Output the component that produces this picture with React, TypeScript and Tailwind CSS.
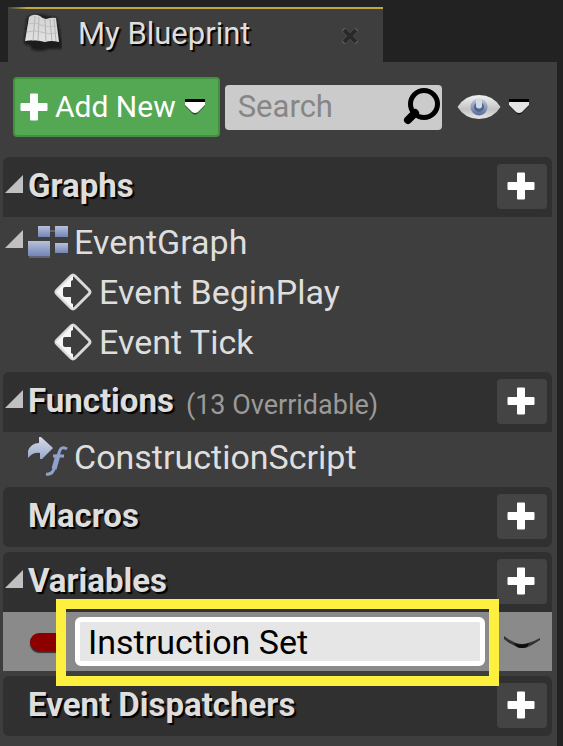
import { useState, type ReactNode } from "react";

const headingShadow = "[text-shadow:2px_2px_1px_#000]";

function PlusIcon() {
  return (
    <svg width="28" height="28" viewBox="0 0 28 28" aria-hidden="true" className="shrink-0">
      <path
        d="M11 0.5h6a1 1 0 0 1 1 1V10h8.500a1 1 0 0 1 1 1v6a1 1 0 0 1-1 1H18v8.500a1 1 0 0 1-1 1h-6a1 1 0 0 1-1-1V18H1.500a1 1 0 0 1-1-1v-6a1 1 0 0 1 1-1H10V1.500a1 1 0 0 1 1-1z"
        fill="#fff"
      />
    </svg>
  );
}

function CaretDown({ light }: { light?: boolean }) {
  return (
    <svg width="22" height="18" viewBox="0 0 22 18" aria-hidden="true" className="shrink-0">
      <path d="M1 3h20v5l-7 7q-3 3-6 0L1 8z" fill="#000" opacity="0.6" />
      <path d="M1 1h20v3H1z" fill="#000" />
      <path d="M1 4h20v3l-7 7q-3 2-6 0L1 7z" fill={light ? "#fff" : "#e4e4e4"} />
    </svg>
  );
}

function BookIcon() {
  return (
    <svg width="40" height="40" viewBox="0 0 40 40" aria-hidden="true" className="shrink-0">
      <defs>
        <linearGradient id="page" x1="0" y1="0" x2="0" y2="1">
          <stop offset="0" stopColor="#d2d2d2" />
          <stop offset="1" stopColor="#e2e2e2" />
        </linearGradient>
        <filter id="shade" x="-20%" y="-20%" width="140%" height="140%">
          <feGaussianBlur stdDeviation="1.2" />
        </filter>
        <filter id="blend" x="-10%" y="-10%" width="120%" height="120%">
          <feGaussianBlur stdDeviation="0.6" />
        </filter>
      </defs>
      <path d="M2 28L5 4l12-3 18 4 5 24v7H26l-6 2-9-1-4-5-5-1z" fill="#1a1a1a" filter="url(#shade)" />
      <g filter="url(#blend)">
        <path d="M7 4q5-4 11-1 3 3 6 3 6-2 10-1l3 24q-8-2-14 0-10-3-20-1z" fill="url(#page)" />
        <path d="M13 3l-2 25M17 4l-1 24M23 6l1 22M28 6l2 22M32 6l2 22" stroke="#b2b2b2" strokeWidth="1" fill="none" />
        <path d="M6 11q8-2 13 1 7 3 16 1M5 19q8-2 14 0 8 3 17 1" stroke="#c0c0c0" strokeWidth="1" fill="none" />
      </g>
    </svg>
  );
}

function SearchIcon() {
  return (
    <svg width="40" height="40" viewBox="0 0 40 40" aria-hidden="true" className="shrink-0">
      <circle cx="22" cy="17" r="13.500" fill="none" stroke="#000" strokeWidth="5" />
      <path d="M13 26L6 33" stroke="#000" strokeWidth="8" strokeLinecap="round" />
    </svg>
  );
}

function EyeIcon() {
  return (
    <svg width="44" height="26" viewBox="0 0 44 26" aria-hidden="true" className="shrink-0">
      <defs>
        <linearGradient id="eyeball" x1="0" y1="0" x2="0" y2="1">
          <stop offset="0" stopColor="#f2f2f2" />
          <stop offset="0.600" stopColor="#c4c4c4" />
          <stop offset="1" stopColor="#e6e6e6" />
        </linearGradient>
        <linearGradient id="iris" x1="0" y1="0" x2="0" y2="1">
          <stop offset="0" stopColor="#c2cad8" />
          <stop offset="1" stopColor="#566d9c" />
        </linearGradient>
        <filter id="irisBlend" x="-10%" y="-10%" width="120%" height="120%">
          <feGaussianBlur stdDeviation="0.7" />
        </filter>
      </defs>
      <path d="M0.500 13Q8 1 22 1t21.500 12Q36 25 22 25T0.500 13z" fill="url(#eyeball)" />
      <g filter="url(#irisBlend)">
        <circle cx="22" cy="13" r="8.500" fill="url(#iris)" />
        <circle cx="22" cy="13" r="5" fill="#4f6590" />
        <path d="M19 5h6v8q-3 3-6 0z" fill="#d3dae6" />
      </g>
    </svg>
  );
}

function GraphIcon() {
  return (
    <svg width="40" height="36" viewBox="0 0 40 36" aria-hidden="true" className="shrink-0">
      <defs>
        <linearGradient id="node" x1="0" y1="0" x2="0" y2="1">
          <stop offset="0" stopColor="#b8c1d8" />
          <stop offset="1" stopColor="#7385b8" />
        </linearGradient>
        <filter id="nodeBlend" x="-10%" y="-10%" width="120%" height="120%">
          <feGaussianBlur stdDeviation="0.6" />
        </filter>
      </defs>
      <g filter="url(#nodeBlend)">
        <path d="M20 7h8M1 33h21" stroke="#5f6373" strokeWidth="2" />
        <rect x="10" y="2" width="12" height="11" fill="url(#node)" />
        <rect x="27" y="2" width="13" height="11" fill="url(#node)" />
        <rect x="0" y="17" width="22" height="15" fill="url(#node)" />
        <rect x="27" y="19" width="13" height="10" fill="url(#node)" />
      </g>
    </svg>
  );
}

function EventIcon() {
  return (
    <svg width="40" height="40" viewBox="0 0 40 40" aria-hidden="true" className="shrink-0">
      <path
        d="M18 4Q20 2 22 4L36 18Q38 20 36 22L22 36Q20 38 18 36L4 22Q2 20 4 18z"
        fill="none"
        stroke="#dadada"
        strokeWidth="3"
      />
      <path d="M20 3L3 20l17 17v-5l-2-1v-6h-6q-2 0-2-2v-6q0-2 2-2h6V9l2-1z" fill="#f6f6f6" />
    </svg>
  );
}

function FunctionIcon() {
  return (
    <svg width="40" height="40" viewBox="0 0 40 40" aria-hidden="true" className="shrink-0">
      <defs>
        <linearGradient id="arrow" x1="0" y1="0" x2="0" y2="1">
          <stop offset="0" stopColor="#d6dbe8" />
          <stop offset="1" stopColor="#98a8cc" />
        </linearGradient>
        <filter id="arrowBlend" x="-10%" y="-10%" width="120%" height="120%">
          <feGaussianBlur stdDeviation="0.5" />
        </filter>
      </defs>
      <g filter="url(#arrowBlend)">
        <path d="M0 21V14Q3 6 11 6V0h2l12 11-11 11h-2v-6q-7-1-12 5z" fill="url(#arrow)" />
        <path d="M39 12q-6-4-8 4l-5 16q-2 6-8 5M25 19h11" stroke="#8fa1cc" strokeWidth="3" fill="none" />
        <path d="M30 18l-4 14" stroke="#8fa1cc" strokeWidth="5" />
      </g>
    </svg>
  );
}

function ClosedEyeIcon() {
  return (
    <svg width="38" height="14" viewBox="0 0 38 14" aria-hidden="true">
      <defs>
        <filter id="lidBlend" x="-10%" y="-20%" width="120%" height="140%">
          <feGaussianBlur stdDeviation="0.7" />
        </filter>
      </defs>
      <g filter="url(#lidBlend)">
        <path d="M1 1Q7 6 13 8t12 0Q32 6 37 3v2Q31 9 26 11.500q-7 3-13 0Q5 8 1 4z" fill="#333" />
        <path d="M11 8q8 3 15 0l-2 4q-5 2-10 0z" fill="#0a0a0a" />
      </g>
    </svg>
  );
}

function Expander() {
  return (
    <svg width="20" height="20" viewBox="0 0 20 20" aria-hidden="true">
      <path d="M19 1v18H1z" fill="#c0c0c0" />
    </svg>
  );
}

function ExpanderSlot({ open }: { open?: boolean }) {
  return <span className="flex w-[25px] shrink-0 justify-start pb-[6px] pl-px">{open && <Expander />}</span>;
}

function Section({ title, note, open, children }: { title: string; note?: string; open?: boolean; children?: ReactNode }) {
  return (
    <section>
      <header className={`flex h-[60px] items-center bg-[#303030] pr-[5px] ${children ? "rounded-t-md" : "rounded-md"}`}>
        <ExpanderSlot open={open} />
        <h2 className={`pb-[2px] text-[33px] leading-10 font-bold whitespace-nowrap ${headingShadow}`}>{title}</h2>
        {note && <span className="pt-[6px] pl-3 text-[27px] leading-9 whitespace-nowrap text-[#9a9a9a]">{note}</span>}
        <button
          type="button"
          aria-label={`Add to ${title}`}
          className="mb-px ml-auto flex h-[45px] w-[50px] shrink-0 items-center justify-center rounded bg-[#444] pr-[2px] pb-[2px]"
        >
          <PlusIcon />
        </button>
      </header>
      {children}
    </section>
  );
}

function Item({ label, icon, expandable, nested }: { label: string; icon: ReactNode; expandable?: boolean; nested?: boolean }) {
  return (
    <div className={`flex h-[50px] items-center ${nested ? "pl-[25px]" : ""}`}>
      <ExpanderSlot open={expandable} />
      {icon}
      <span className="pl-[6px] text-[34px] leading-10 whitespace-nowrap">{label}</span>
    </div>
  );
}

export default function App() {
  const [name, setName] = useState("Instruction Set");
  return (
    <div className="min-h-screen bg-[#222] pr-[6px] font-['Roboto','Noto_Sans',sans-serif] text-[#dedede]">
      <div className="pt-[7px] pl-2">
        <div className="w-[375px] bg-[#3e3e3e]">
          <div className="h-[2px] bg-linear-to-r from-[#3e3e3e] via-[#bfa93a] via-5% to-[#bfa93a] to-95%" />
          <div className="flex h-[53px] items-center pr-[25px] pl-[14px]">
            <div className="pb-[6px]">
              <BookIcon />
            </div>
            <h1 className={`pb-1 pl-4 text-[31px] leading-10 whitespace-nowrap ${headingShadow}`}>My Blueprint</h1>
            <button type="button" aria-label="Close tab" className="ml-auto">
              <svg width="16" height="16" viewBox="0 0 16 16" aria-hidden="true">
                <path d="M1 1l14 14M15 1L1 15" stroke="#5a5a5a" strokeWidth="5" />
                <path d="M2 2l12 12M14 2L2 14" stroke="#292929" strokeWidth="4" />
              </svg>
            </button>
          </div>
        </div>
      </div>
      <main className="min-h-[calc(100vh-62px)] bg-[#3e3e3e] pr-[5px] pb-[10px] pl-[3px]">
        <div className="flex h-[95px] items-center pb-[5px] pl-[10px]">
          <button
            type="button"
            className="flex h-[60px] shrink-0 items-center rounded-sm border-2 border-[#43913f] bg-[#54a854] pr-3 pl-[5px] text-white"
          >
            <PlusIcon />
            <span className="pr-2 pl-[7px] text-[30px] leading-10 whitespace-nowrap">Add New</span>
            <CaretDown light />
          </button>
          <div className="ml-[5px] flex h-[45px] w-[217px] items-center rounded bg-[#cbcbcb] pl-[13px]">
            <input
              type="search"
              aria-label="Search"
              placeholder="Search"
              className="min-w-0 flex-1 bg-transparent text-[31px] leading-10 text-black outline-none placeholder:text-[#868686] placeholder:opacity-100"
            />
            <SearchIcon />
          </div>
          <button type="button" aria-label="View options" className="ml-[15px] flex shrink-0 items-center gap-[7px]">
            <EyeIcon />
            <CaretDown />
          </button>
        </div>
        <div className="flex flex-col gap-[5px]">
          <Section title="Graphs" open>
            <Item label="EventGraph" icon={<GraphIcon />} expandable />
            <Item label="Event BeginPlay" icon={<EventIcon />} nested />
            <Item label="Event Tick" icon={<EventIcon />} nested />
          </Section>
          <Section title="Functions" note="(13 Overridable)" open>
            <Item label="ConstructionScript" icon={<FunctionIcon />} />
          </Section>
          <Section title="Macros" />
          <Section title="Variables" open>
            <div className="relative flex h-[59px] items-center bg-[#8a8a8a] pr-[11px] pl-[27px]">
              <span className="h-[18px] w-[30px] shrink-0 rounded-l-full bg-[#8c0000] shadow-[0_2px_1px_#333]" />
              <input
                aria-label="Variable name"
                value={name}
                onChange={(e) => setName(e.target.value)}
                className="ml-[15px] h-[49px] min-w-0 flex-1 rounded-md border-[5px] border-white bg-[#e6e6e6] pl-2 text-[34px] leading-10 text-black outline-none"
              />
              <button type="button" aria-label="Toggle visibility" className="ml-[18px] shrink-0">
                <ClosedEyeIcon />
              </button>
              <div className="pointer-events-none absolute -top-[13px] right-[53px] left-[53px] h-[87px] border-10 border-[#fdf03e]" />
            </div>
          </Section>
          <Section title="Event Dispatchers" />
        </div>
      </main>
    </div>
  );
}
